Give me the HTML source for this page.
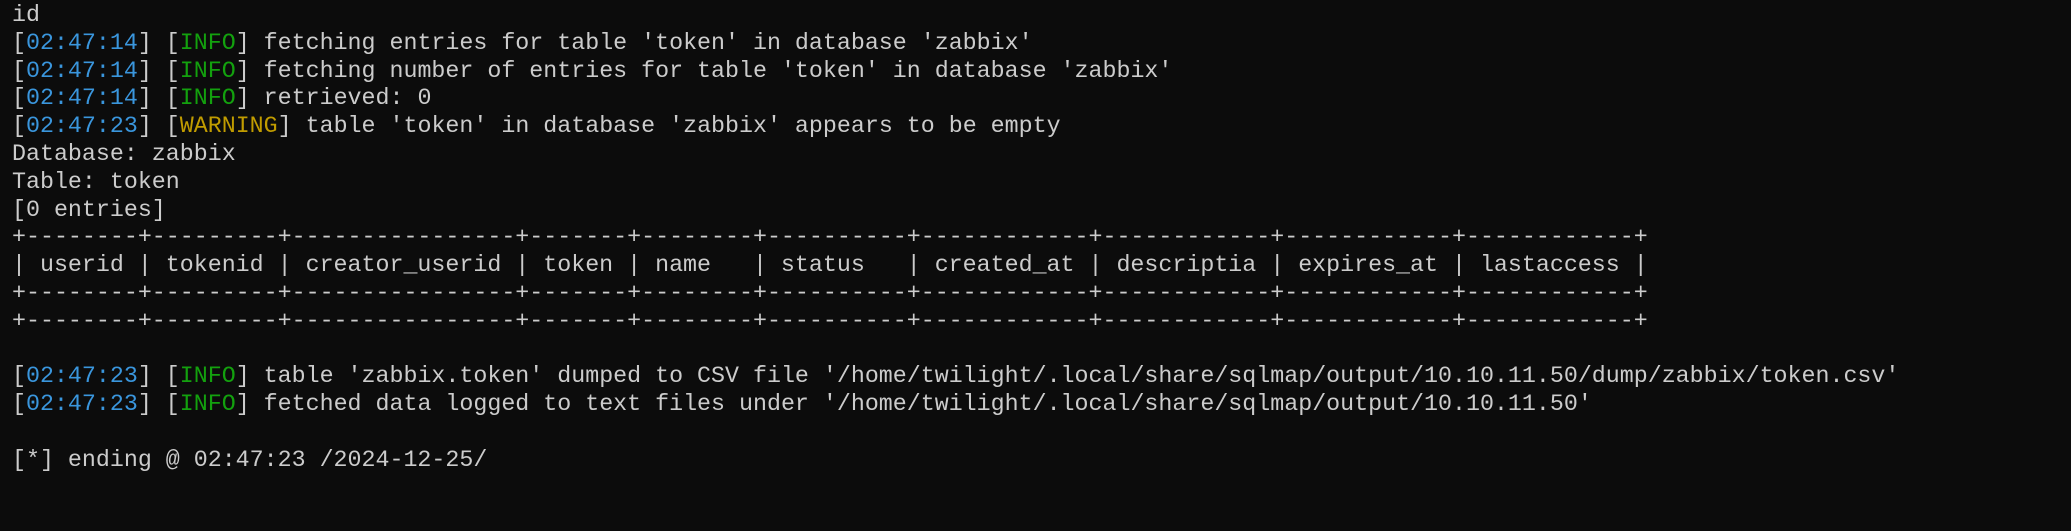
<!DOCTYPE html>
<html><head><meta charset="utf-8"><style>
html,body{margin:0;background:#0c0c0c;width:2071px;height:531px;overflow:hidden}
pre{margin:0;padding:2px 0 0 12px;font-family:"Liberation Mono",monospace;font-size:23.3px;line-height:27.8px;color:#cccccc}
.b{color:#3a96dd}.g{color:#13a10e}.y{color:#c19c00}
</style></head><body><pre>id
[<span class="b">02:47:14</span>] [<span class="g">INFO</span>] fetching entries for table 'token' in database 'zabbix'
[<span class="b">02:47:14</span>] [<span class="g">INFO</span>] fetching number of entries for table 'token' in database 'zabbix'
[<span class="b">02:47:14</span>] [<span class="g">INFO</span>] retrieved: 0
[<span class="b">02:47:23</span>] [<span class="y">WARNING</span>] table 'token' in database 'zabbix' appears to be empty
Database: zabbix
Table: token
[0 entries]
+--------+---------+----------------+-------+--------+----------+------------+------------+------------+------------+
| userid | tokenid | creator_userid | token | name   | status   | created_at | descriptia | expires_at | lastaccess |
+--------+---------+----------------+-------+--------+----------+------------+------------+------------+------------+
+--------+---------+----------------+-------+--------+----------+------------+------------+------------+------------+

[<span class="b">02:47:23</span>] [<span class="g">INFO</span>] table 'zabbix.token' dumped to CSV file '/home/twilight/.local/share/sqlmap/output/10.10.11.50/dump/zabbix/token.csv'
[<span class="b">02:47:23</span>] [<span class="g">INFO</span>] fetched data logged to text files under '/home/twilight/.local/share/sqlmap/output/10.10.11.50'

[*] ending @ 02:47:23 /2024-12-25/
</pre></body></html>
